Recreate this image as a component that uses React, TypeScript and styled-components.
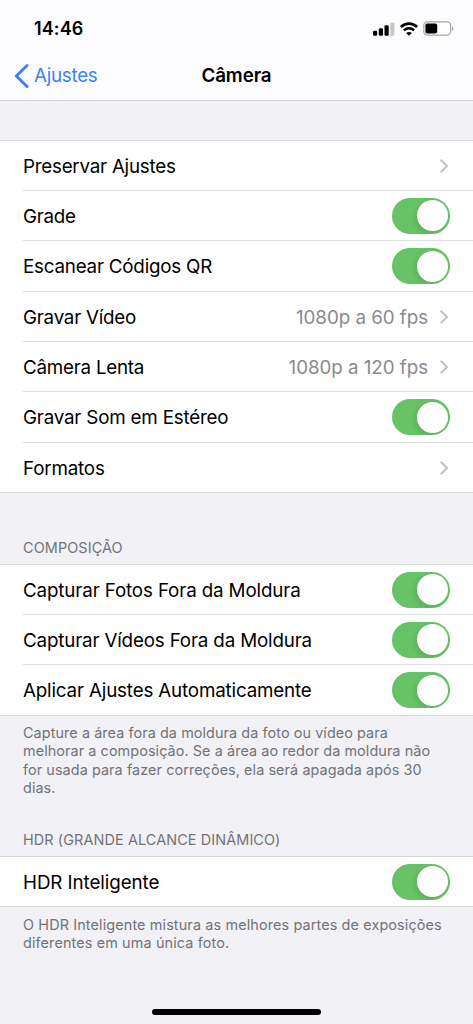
import React from "react";
import styled, { createGlobalStyle } from "styled-components";

const GlobalStyle = createGlobalStyle`
  * { box-sizing: border-box; }
  body {
    margin: 0;
    background: #f2f1f6;
    font-family: Inter, "Liberation Sans", sans-serif;
    color: #000;
  }
`;

const Screen = styled.div`
  display: flex;
  flex-direction: column;
  width: 473px;
  height: 1024px;
  overflow: hidden;
  background: #f2f1f6;
`;

const Header = styled.header`
  height: 101px;
  background: #fcfcfe;
  border-bottom: 1px solid #d2d2d5;
`;

const StatusBar = styled.div`
  display: flex;
  align-items: center;
  justify-content: space-between;
  height: 50px;
  padding: 7px 19px 0 34px;
`;

const Clock = styled.span`
  font-size: 18px;
  font-weight: 600;
  letter-spacing: 0.1px;
  line-height: 22px;
`;

const StatusIcons = styled.div`
  display: flex;
  align-items: center;
`;

const NavBar = styled.nav`
  display: grid;
  grid-template-columns: 1fr auto 1fr;
  align-items: center;
  height: 50px;
  padding: 1px 14px 0;
`;

const Back = styled.a`
  display: flex;
  align-items: center;
  gap: 5px;
  color: #3c82f7;
  font-size: 18.8px;
  letter-spacing: -0.27px;
`;

const Title = styled.h1`
  margin: 0;
  font-size: 18.8px;
  font-weight: 600;
  letter-spacing: -0.1px;
`;

const Group = styled.section<{ $gap: number }>`
  margin-top: ${(p) => p.$gap}px;
`;

const GroupTitle = styled.h2`
  margin: 0;
  padding: 0 23px 7px;
  font-size: 14.4px;
  font-weight: 400;
  line-height: 18px;
  letter-spacing: 0.12px;
  color: #737377;
`;

const List = styled.div`
  background: #fff;
  border-top: 1px solid #d8d8db;
  border-bottom: 1px solid #d8d8db;
`;

const Row = styled.div<{ $height: number }>`
  display: flex;
  align-items: center;
  height: ${(p) => p.$height}px;
  margin-left: 23px;
  padding-right: 23px;
  border-bottom: 1px solid #dedee0;
  &:last-child {
    height: ${(p) => p.$height - 1}px;
    border-bottom: 0;
  }
`;

const Label = styled.span<{ $spacing: number }>`
  flex: 1;
  padding-top: 2px;
  font-size: 18.8px;
  line-height: 24px;
  letter-spacing: ${(p) => p.$spacing}px;
  white-space: nowrap;
`;

const Value = styled.span`
  padding-top: 2px;
  margin-right: 11px;
  font-size: 18.8px;
  line-height: 24px;
  letter-spacing: -0.05px;
  color: #8a8a8d;
`;

const Switch = styled.div`
  display: flex;
  justify-content: flex-end;
  align-items: center;
  width: 58px;
  height: 36px;
  padding: 2px;
  border-radius: 18px;
  background: #66c466;
  overflow: hidden;
`;

const Knob = styled.div`
  width: 31px;
  height: 31px;
  border-radius: 50%;
  background: #fff;
  box-shadow: -2px 2px 6px rgba(0, 0, 0, 0.12);
`;

const Note = styled.p<{ $spacing: number; $top: number }>`
  margin: 0;
  padding: ${(p) => p.$top}px 23px 0;
  font-size: 14.4px;
  line-height: 18.3px;
  letter-spacing: ${(p) => p.$spacing}px;
  white-space: pre-line;
  color: #737377;
`;

const HomeIndicator = styled.div`
  width: 169px;
  height: 6px;
  margin: auto auto 9px;
  border-radius: 3px;
  background: #000;
`;

const Signal = () => (
  <svg width="22" height="14" viewBox="0 0 22 14">
    <rect x="0" y="8.8" width="4.2" height="5" rx="1.2" />
    <rect x="5.8" y="6.2" width="4.2" height="7.6" rx="1.2" />
    <rect x="11.5" y="3.2" width="4.2" height="10.6" rx="1.2" />
    <rect x="17.2" y="0.8" width="4.2" height="13" rx="1.2" fill="#c8c8ca" />
  </svg>
);

const StatusSvg = styled.svg`
  margin-left: 5px;
`;

const Wifi = () => (
  <StatusSvg width="18" height="14" viewBox="0 0 18 14" fill="none" stroke="#000" strokeWidth="2.6">
    <path d="M0.9 5C5.5 0.5 12.5 0.5 17.1 5" />
    <path d="M3.9 8.4C6.8 5.6 11.2 5.6 14.1 8.4" />
    <path d="M9 13.8L6.1 11C7.7 9.6 10.3 9.6 11.9 11Z" fill="#000" stroke="none" />
  </StatusSvg>
);

const Battery = () => (
  <StatusSvg width="31" height="15" viewBox="0 0 31 15">
    <rect x="0.8" y="0.9" width="26.8" height="13.2" rx="3.6" fill="#fff" stroke="#a5a5a7" strokeWidth="1.2" />
    <rect x="2.4" y="2.5" width="11.8" height="10" rx="1.8" />
    <path d="M29 5.2C30.9 6 30.9 9 29 9.8Z" fill="#a5a5a7" />
  </StatusSvg>
);

const BackChevron = () => (
  <svg width="15" height="26" viewBox="0 0 15 26" fill="none" stroke="#3c82f7" strokeWidth="3" strokeLinecap="round" strokeLinejoin="round">
    <path d="M13 2.5L2.3 13L13 23.5" />
  </svg>
);

const ChevronMark = styled.svg`
  margin-right: 1px;
`;

const Chevron = () => (
  <ChevronMark width="10" height="16" viewBox="0 0 10 16" fill="none" stroke="#c4c4c7" strokeWidth="2.1">
    <path d="M1.7 1.7L8 8L1.7 14.3" />
  </ChevronMark>
);

type Item = { label: string; spacing?: number; height?: number; value?: string; on?: boolean };

const general: Item[] = [
  { label: "Preservar Ajustes", spacing: -0.24 },
  { label: "Grade", on: true },
  { label: "Escanear Códigos QR", on: true, height: 51, spacing: -0.22 },
  { label: "Gravar Vídeo", value: "1080p a 60 fps", spacing: -0.24 },
  { label: "Câmera Lenta", value: "1080p a 120 fps", spacing: -0.24 },
  { label: "Gravar Som em Estéreo", on: true, height: 51, spacing: -0.2 },
  { label: "Formatos", spacing: -0.18 },
];

const composition: Item[] = [
  { label: "Capturar Fotos Fora da Moldura", on: true, spacing: -0.14 },
  { label: "Capturar Vídeos Fora da Moldura", on: true, spacing: -0.17 },
  { label: "Aplicar Ajustes Automaticamente", on: true, height: 51, spacing: -0.17 },
];

const hdr: Item[] = [{ label: "HDR Inteligente", on: true, spacing: -0.08 }];

const Items = ({ items }: { items: Item[] }) => (
  <List>
    {items.map(({ label, spacing = -0.3, height = 50, value, on }) => (
      <Row key={label} $height={height}>
        <Label $spacing={spacing}>{label}</Label>
        {value && <Value>{value}</Value>}
        {on ? (
          <Switch role="switch" aria-checked="true">
            <Knob />
          </Switch>
        ) : (
          <Chevron />
        )}
      </Row>
    ))}
  </List>
);

export default function App() {
  return (
    <Screen>
      <GlobalStyle />
      <Header>
        <StatusBar>
          <Clock>14:46</Clock>
          <StatusIcons>
            <Signal />
            <Wifi />
            <Battery />
          </StatusIcons>
        </StatusBar>
        <NavBar>
          <Back>
            <BackChevron />
            Ajustes
          </Back>
          <Title>Câmera</Title>
        </NavBar>
      </Header>
      <Group $gap={39}>
        <Items items={general} />
      </Group>
      <Group $gap={46}>
        <GroupTitle>COMPOSIÇÃO</GroupTitle>
        <Items items={composition} />
        <Note $spacing={0.08} $top={8}>
          {"Capture a área fora da moldura da foto ou vídeo para\nmelhorar a composição. Se a área ao redor da moldura não\nfor usada para fazer correções, ela será apagada após 30\ndias."}
        </Note>
      </Group>
      <Group $gap={34}>
        <GroupTitle>HDR (GRANDE ALCANCE DINÂMICO)</GroupTitle>
        <Items items={hdr} />
        <Note $spacing={0.13} $top={9}>
          {"O HDR Inteligente mistura as melhores partes de exposições\ndiferentes em uma única foto."}
        </Note>
      </Group>
      <HomeIndicator />
    </Screen>
  );
}
